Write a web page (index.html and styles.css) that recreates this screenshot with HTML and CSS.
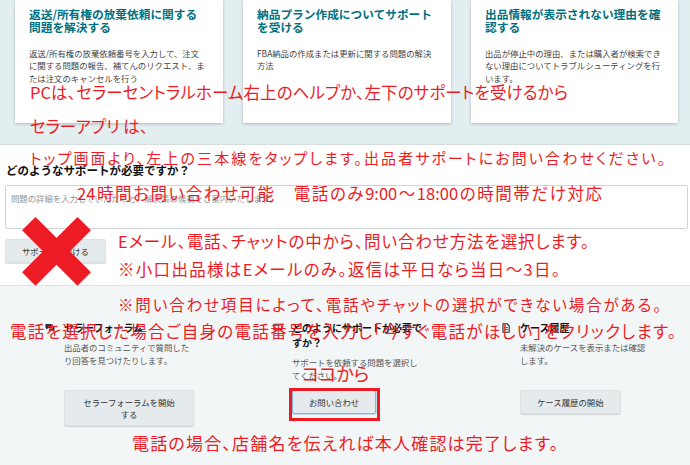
FILE: index.html
```html
<!DOCTYPE html>
<html lang="ja">
<head>
<meta charset="utf-8">
<title>サポート</title>
<link rel="stylesheet" href="styles.css">
</head>
<body>
<div class="page">
  <section class="top">
    <div class="cards">
      <div class="card">
        <h3 class="card-title">返送/所有権の放棄依頼に関する問題を解決する</h3>
        <p class="card-desc">返送/所有権の放棄依頼番号を入力して、注文に関する問題の報告、補てんのリクエスト、または注文のキャンセルを行う</p>
      </div>
      <div class="card">
        <h3 class="card-title">納品プラン作成についてサポートを受ける</h3>
        <p class="card-desc">FBA納品の作成または更新に関する問題の解決方法</p>
      </div>
      <div class="card">
        <h3 class="card-title">出品情報が表示されない理由を確認する</h3>
        <p class="card-desc">出品が停止中の理由、または購入者が検索できない理由についてトラブルシューティングを行います。</p>
      </div>
    </div>
  </section>

  <section class="help">
    <h2 class="help-title">どのようなサポートが必要ですか？</h2>
    <textarea class="help-input" placeholder="問題の詳細を入力していただくと、解決策の候補をご案内いたします。"></textarea>
    <button class="btn">サポートを受ける</button>
  </section>

  <section class="contact">
    <div class="col">
      <svg class="col-icon" viewBox="0 0 10 10" aria-hidden="true">
        <path d="M0.5 1h6v4.2h-3.6l-1.6 1.5v-1.5h-0.8z" fill="#232f3e"/>
        <path d="M7.3 3.2h2.2v4.2h-0.8v1.4l-1.5-1.4h-3.2v-1.4h3.3z" fill="#232f3e"/>
      </svg>
      <div class="col-text">
        <h4 class="col-title">セラーフォーラム</h4>
        <p class="col-desc">出品者のコミュニティで質問したり回答を見つけたりします。</p>
      </div>
      <button class="btn">セラーフォーラムを開始する</button>
    </div>
    <div class="col">
      <svg class="col-icon" viewBox="0 0 10 10" aria-hidden="true">
        <path d="M1 1.2h8v5.6h-4.6l-2 1.8v-1.8h-1.4z" fill="none" stroke="#232f3e" stroke-width="1.1"/>
      </svg>
      <div class="col-text">
        <h4 class="col-title">どのようにサポートが必要ですか？</h4>
        <p class="col-desc">サポートを依頼する問題を選択してください。</p>
      </div>
      <button class="btn btn-focus">お問い合わせ</button>
    </div>
    <div class="col">
      <svg class="col-icon" viewBox="0 0 10 10" aria-hidden="true">
        <path d="M2 0.8h4.2l2 2v6.4h-6.2z" fill="none" stroke="#232f3e" stroke-width="1.1"/>
        <path d="M3.4 4.6h3.4M3.4 6.6h3.4" stroke="#232f3e" stroke-width="0.9"/>
      </svg>
      <div class="col-text">
        <h4 class="col-title">ケース履歴</h4>
        <p class="col-desc">未解決のケースを表示または確認します。</p>
      </div>
      <button class="btn">ケース履歴の開始</button>
    </div>
  </section>

  <div class="notes">
    <div class="note n1 fit">PCは、セラーセントラルホーム右上のヘルプか、左下のサポートを受けるから</div>
    <div class="note n2">セラーアプリ は、</div>
    <div class="note n3 fit">トップ画面より、左上の三本線をタップします。出品者サポートにお問い合わせください。</div>
    <div class="note n4 fit">24時間お問い合わせ可能　電話のみ9:00～18:00の時間帯だけ対応</div>
    <div class="note n5 fit">Eメール、電話、チャットの中から、問い合わせ方法を選択します。</div>
    <div class="note n6 fit">※小口出品様はEメールのみ。返信は平日なら当日～3日。</div>
    <div class="note n7 fit">※問い合わせ項目によって、電話やチャットの選択ができない場合がある。</div>
    <div class="note n8 fit">電話を選択した場合ご自身の電話番号を入力し「今すぐ電話がほしい」をクリックします。</div>
    <div class="note n9">ココから</div>
    <div class="note n10 fit">電話の場合、店舗名を伝えれば本人確認は完了します。</div>
    <svg class="cross" viewBox="0 0 74 72" aria-hidden="true">
      <path d="M8.8 8.6L64.2 64M64.2 8.6L8.8 64" stroke="#ed1c24" stroke-width="19" fill="none"/>
    </svg>
    <div class="mark"></div>
  </div>
</div>
</body>
</html>
```

FILE: styles.css
```css
* { box-sizing: border-box; }
html, body { margin: 0; padding: 0; }
body {
  width: 690px;
  height: 465px;
  overflow: hidden;
  font-family: "Noto Sans CJK JP", "Noto Sans", sans-serif;
  color: #333;
  background: #fff;
}
.page {
  position: relative;
  width: 690px;
  height: 465px;
  overflow: hidden;
}

/* top cards */
.top {
  height: 145px;
  background: #e3eef0;
  border-bottom: 1px solid #d6dddf;
}
.cards {
  display: grid;
  grid-template-columns: 208px 208px 207px;
  column-gap: 20px;
  padding-left: 15px;
}
.card {
  height: 123px;
  background: #fff;
  padding: 7px 14px 0 14px;
  box-shadow: 0 1px 3px rgba(0, 0, 0, 0.22);
}
.card-title {
  margin: 0 0 13.5px;
  font-size: 11.7px;
  line-height: 13px;
  font-weight: 700;
  color: #00707f;
  width: 178px;
}
.card-desc {
  margin: 0;
  font-size: 8.4px;
  line-height: 12.7px;
  color: #444;
  width: 178px;
}

/* help */
.help {
  height: 141px;
  background: #fff;
  border-bottom: 1px solid #dde3e4;
  padding: 18px 2px 0 5px;
  display: flex;
  flex-direction: column;
  align-items: flex-start;
}
.help-title {
  margin: 0 0 8px 1px;
  font-size: 11.5px;
  line-height: 14px;
  font-weight: 700;
  color: #111;
}
.help-input {
  width: 683px;
  height: 44px;
  margin: 0 0 10px;
  padding: 6px 5px;
  border: 1px solid #cfd4d6;
  border-radius: 2px;
  resize: none;
  font-family: "Noto Sans CJK JP", "Noto Sans", sans-serif;
  font-size: 8.4px;
  line-height: 12px;
  background: #fff;
}
.help-input::placeholder { color: #8e9699; }

.btn {
  font-family: "Noto Sans CJK JP", "Noto Sans", sans-serif;
  font-size: 8.4px;
  line-height: 12px;
  color: #333;
  background: #e5ebed;
  border: 1px solid #dce3e5;
  border-radius: 2px;
  padding: 5px 16px;
  box-shadow: 0 1px 1px rgba(0, 0, 0, 0.14);
  text-align: center;
}
.btn-focus {
  border-color: #86b3e3;
  box-shadow: 0 0 0 1px #c3dbf3;
}

/* contact columns */
.contact {
  height: 179px;
  background: #f3f6f7;
  padding-top: 34px;
  display: grid;
  grid-template-columns: repeat(3, 228px);
  grid-template-rows: auto auto;
  align-content: start;
  row-gap: 7.5px;
}
.col {
  grid-row: 1 / span 2;
  display: grid;
  grid-template-rows: subgrid;
  grid-template-columns: 10px 132px;
  column-gap: 9px;
  padding-left: 45px;
}
.col-icon {
  grid-row: 1;
  grid-column: 1;
  width: 10px;
  height: 10px;
  margin-top: 3px;
}
.col-text {
  grid-row: 1;
  grid-column: 2;
  display: flex;
  flex-direction: column;
  gap: 6px;
}
.col-title {
  margin: 0;
  font-size: 10px;
  line-height: 15px;
  font-weight: 700;
  color: #111;
}
.col-desc {
  margin: 0;
  font-size: 8.4px;
  line-height: 13px;
  color: #555;
}
.col .btn {
  grid-row: 2;
  grid-column: 2;
  justify-self: start;
  align-self: start;
  max-width: 130px;
}

/* annotations */
.note {
  position: absolute;
  color: #ed1c24;
  font-family: "Noto Sans CJK JP", sans-serif;
  font-size: 16.5px;
  line-height: 20px;
  font-feature-settings: "palt";
  white-space: nowrap;
}
.fit {
  white-space: normal;
  text-align: justify;
  text-align-last: justify;
}
.n1 { left: 30px; top: 82px; width: 538px; }
.n2 { left: 30px; top: 116px; }
.n3 { left: 30px; top: 148px; width: 635px; font-size: 15px; }
.n4 { left: 77px; top: 183px; width: 525px; }
.n5 { left: 118px; top: 231px; width: 471px; }
.n6 { left: 118px; top: 259px; width: 442px; }
.n7 { left: 118px; top: 294px; width: 543px; font-size: 15.5px; }
.n8 { left: 10px; top: 321px; width: 666px; }
.n9 { left: 302px; top: 362px; font-size: 18px; line-height: 22px; }
.n10 { left: 132px; top: 433px; width: 426px; font-size: 17px; }

.cross {
  position: absolute;
  left: 20px;
  top: 215px;
  width: 74px;
  height: 72px;
}
.mark {
  position: absolute;
  left: 289px;
  top: 388px;
  width: 91px;
  height: 33px;
  border: 3px solid #ed1c24;
}
```
